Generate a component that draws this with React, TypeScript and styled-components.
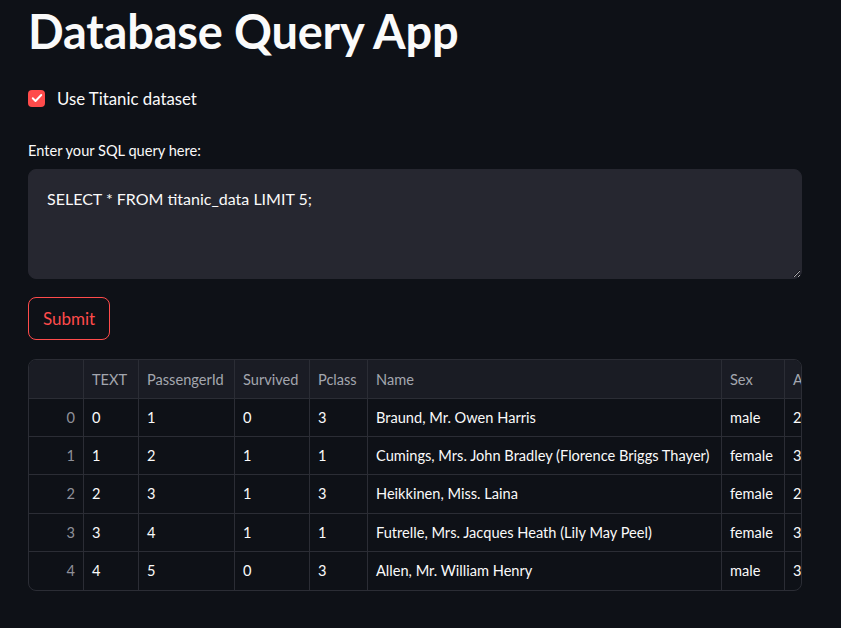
import React from "react";
import styled, { createGlobalStyle } from "styled-components";

const GlobalStyle = createGlobalStyle`
  html, body {
    margin: 0;
    padding: 0;
    background: #0e1117;
    color: #fafafa;
    font-family: Lato, "Noto Sans", sans-serif;
  }
`;

type Row = {
  text: number;
  passengerId: number;
  survived: number;
  pclass: number;
  name: string;
  sex: string;
  age: string;
};

const rows: Row[] = [
  { text: 0, passengerId: 1, survived: 0, pclass: 3, name: "Braund, Mr. Owen Harris", sex: "male", age: "22" },
  { text: 1, passengerId: 2, survived: 1, pclass: 1, name: "Cumings, Mrs. John Bradley (Florence Briggs Thayer)", sex: "female", age: "38" },
  { text: 2, passengerId: 3, survived: 1, pclass: 3, name: "Heikkinen, Miss. Laina", sex: "female", age: "26" },
  { text: 3, passengerId: 4, survived: 1, pclass: 1, name: "Futrelle, Mrs. Jacques Heath (Lily May Peel)", sex: "female", age: "35" },
  { text: 4, passengerId: 5, survived: 0, pclass: 3, name: "Allen, Mr. William Henry", sex: "male", age: "35" },
];

const columns = ["TEXT", "PassengerId", "Survived", "Pclass", "Name", "Sex", "Age"];

const App = () => {
  return (
    <>
      <GlobalStyle />
      <Main>
        <Title>Database Query App</Title>
        <CheckRow>
          <CheckBox>
            <svg width="12" height="12" viewBox="0 0 24 24" fill="none">
              <path
                d="M3.5 12.5l5.5 5.5L20.5 6"
                stroke="#fff"
                strokeWidth="3.8"
                strokeLinecap="round"
                strokeLinejoin="round"
              />
            </svg>
          </CheckBox>
          <CheckLabel>Use Titanic dataset</CheckLabel>
        </CheckRow>
        <FieldLabel>Enter your SQL query here:</FieldLabel>
        <QueryArea defaultValue="SELECT * FROM titanic_data LIMIT 5;" />
        <SubmitButton>Submit</SubmitButton>
        <TableFrame>
          <Grid>
            <HeaderCell />
            {columns.map((c) => (
              <HeaderCell key={c}>{c}</HeaderCell>
            ))}
            {rows.map((r, i) => {
              const last = i === rows.length - 1;
              return (
                <React.Fragment key={i}>
                  <IndexCell $last={last}>{i}</IndexCell>
                  <Cell $last={last}>{r.text}</Cell>
                  <Cell $last={last}>{r.passengerId}</Cell>
                  <Cell $last={last}>{r.survived}</Cell>
                  <Cell $last={last}>{r.pclass}</Cell>
                  <Cell $last={last}>{r.name}</Cell>
                  <Cell $last={last}>{r.sex}</Cell>
                  <Cell $last={last}>{r.age}</Cell>
                </React.Fragment>
              );
            })}
          </Grid>
        </TableFrame>
      </Main>
    </>
  );
};

export const Main = styled.div`
  display: flex;
  flex-direction: column;
  align-items: flex-start;
  width: 774px;
  padding-left: 28px;
`;

export const Title = styled.h1`
  margin: 0;
  height: 62px;
  font-size: 47px;
  line-height: 62px;
  font-weight: 700;
  color: #fafafa;
  letter-spacing: -0.2px;
`;

export const CheckRow = styled.label`
  display: flex;
  align-items: center;
  gap: 12px;
  height: 24px;
  margin-top: 24px;
`;

export const CheckBox = styled.span`
  display: flex;
  align-items: center;
  justify-content: center;
  width: 17px;
  height: 17px;
  border-radius: 4px;
  background: #ff4b4b;
`;

export const CheckLabel = styled.span`
  font-size: 16.8px;
  color: #fafafa;
`;

export const FieldLabel = styled.div`
  margin-top: 30px;
  height: 22px;
  line-height: 22px;
  font-size: 14.6px;
  color: #fafafa;
`;

export const QueryArea = styled.textarea`
  box-sizing: border-box;
  margin-top: 7px;
  width: 774px;
  height: 110px;
  padding: 16px 18px;
  border: 1px solid #262730;
  border-radius: 8px;
  background: #262730;
  color: #fafafa;
  font-family: Lato, "Noto Sans", sans-serif;
  font-size: 16px;
  line-height: 1.6;
  resize: vertical;
  outline: none;
`;

export const SubmitButton = styled.button`
  box-sizing: border-box;
  margin-top: 18px;
  height: 43px;
  width: 82px;
  border: 1px solid #ff4b4b;
  border-radius: 8px;
  background: transparent;
  color: #ff4b4b;
  font-family: Lato, "Noto Sans", sans-serif;
  font-size: 17px;
  cursor: pointer;
`;

export const TableFrame = styled.div`
  box-sizing: border-box;
  margin-top: 19px;
  width: 774px;
  height: 232px;
  border: 1px solid #2b2d35;
  border-radius: 8px;
  overflow: hidden;
`;

export const Grid = styled.div`
  display: grid;
  grid-template-columns: 55px 55px 96px 75px 58px 354px 63px 60px;
  grid-template-rows: 39px repeat(5, 1fr);
  height: 100%;
  font-size: 14.6px;
`;

const cellBase = `
  display: flex;
  align-items: center;
  padding: 0 8px;
  white-space: nowrap;
  overflow: hidden;
  border-right: 1px solid #2b2d35;
`;

export const HeaderCell = styled.div`
  ${cellBase}
  background: #1a1c24;
  color: #a3a6ae;
  border-bottom: 1px solid #2b2d35;
`;

export const Cell = styled.div<{ $last?: boolean }>`
  ${cellBase}
  color: #fafafa;
  border-bottom: ${(p) => (p.$last ? "none" : "1px solid #2b2d35")};
`;

export const IndexCell = styled(Cell)`
  justify-content: flex-end;
  color: #8e9099;
`;

export default App;
